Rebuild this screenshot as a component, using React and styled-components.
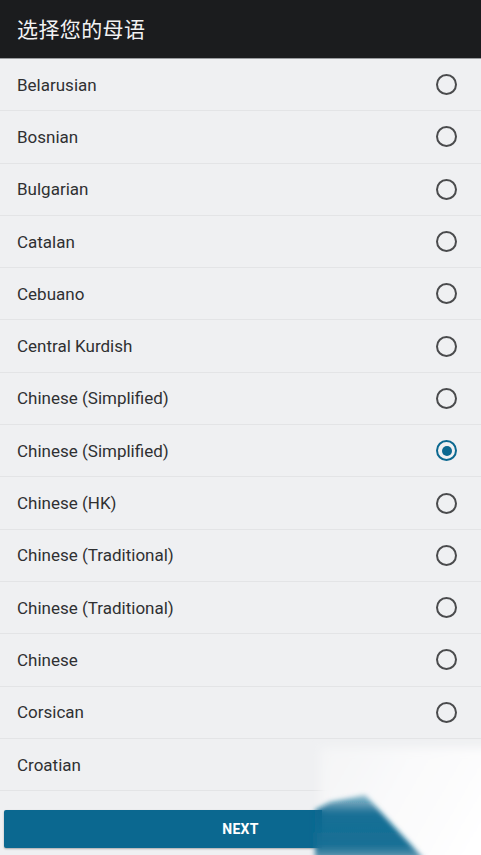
import React, { useState } from "react";
import styled, { createGlobalStyle } from "styled-components";

const Global = createGlobalStyle`
  html, body { margin: 0; padding: 0; background: #eff0f2; }
  body { font-family: Roboto, "Noto Sans", "Noto Sans CJK SC", sans-serif; }
  * { box-sizing: border-box; }
`;

const Page = styled.div`
  position: relative;
  width: 481px;
  height: 855px;
  overflow: hidden;
  background: #eff0f2;
  display: flex;
  flex-direction: column;
`;

const Header = styled.header`
  height: 59px;
  flex: none;
  background: #1b1c1e;
  border-bottom: 1px solid #9a9c9f;
  display: flex;
  align-items: center;
  padding: 0 17px 2px;
  color: #f2f2f2;
  font-family: "Noto Sans CJK SC", "Noto Sans", sans-serif;
  font-size: 21px;
  letter-spacing: 0.4px;
`;

const List = styled.ul`
  list-style: none;
  margin: 0;
  padding: 0;
  flex: none;
`;

const Row = styled.li`
  height: 52.3px;
  display: flex;
  align-items: center;
  justify-content: space-between;
  padding: 0 24px 0 17px;
  border-bottom: 1px solid #e3e4e6;
  font-size: 17px;
  color: #2f3032;
  cursor: pointer;
`;

const Radio = styled.span`
  width: 21px;
  height: 21px;
  border-radius: 50%;
  border: 2px solid ${(p) => (p.$on ? "#0b6890" : "#4a4b4d")};
  display: flex;
  align-items: center;
  justify-content: center;
  &::after {
    content: "";
    width: 10px;
    height: 10px;
    border-radius: 50%;
    background: ${(p) => (p.$on ? "#0b6890" : "transparent")};
  }
`;

const Footer = styled.div`
  padding: 19px 4px 7px;
`;

const NextButton = styled.button`
  width: 100%;
  height: 38px;
  border: none;
  border-radius: 2px;
  background: #0b6890;
  color: #ffffff;
  font-family: Roboto, sans-serif;
  font-weight: 700;
  font-size: 14px;
  letter-spacing: 0.3px;
  box-shadow: 0 1px 2px rgba(0, 0, 0, 0.3);
`;

const Smear = styled.svg`
  position: absolute;
  left: 290px;
  top: 734px;
  width: 191px;
  height: 121px;
  pointer-events: none;
`;

const languages = [
  "Belarusian",
  "Bosnian",
  "Bulgarian",
  "Catalan",
  "Cebuano",
  "Central Kurdish",
  "Chinese (Simplified)",
  "Chinese (Simplified)",
  "Chinese (HK)",
  "Chinese (Traditional)",
  "Chinese (Traditional)",
  "Chinese",
  "Corsican",
  "Croatian",
];

export default function App() {
  const [sel, setSel] = useState(7);
  return (
    <Page>
      <Global />
      <Header>选择您的母语</Header>
      <List>
        {languages.map((l, i) => (
          <Row key={i} onClick={() => setSel(i)}>
            <span>{l}</span>
            {i < 13 && <Radio $on={sel === i} />}
          </Row>
        ))}
      </List>
      <Footer>
        <NextButton>NEXT</NextButton>
      </Footer>
      <Smear viewBox="0 0 191 121">
        <defs>
          <linearGradient id="whiteG" x1="0" x2="1" y1="0" y2="0.4">
            <stop offset="0" stopColor="#f4f5f6" />
            <stop offset="0.5" stopColor="#fafafb" />
            <stop offset="1" stopColor="#ffffff" />
          </linearGradient>
          <linearGradient id="blueV" gradientUnits="userSpaceOnUse" x1="0" y1="60" x2="0" y2="125">
            <stop offset="0" stopColor="#0b6890" stopOpacity="0.35" />
            <stop offset="0.3" stopColor="#0b6890" stopOpacity="0.95" />
            <stop offset="0.8" stopColor="#176f95" stopOpacity="1" />
            <stop offset="1" stopColor="#4f8aa6" stopOpacity="0.85" />
          </linearGradient>
          <filter id="blurW" x="-30%" y="-30%" width="160%" height="160%">
            <feGaussianBlur stdDeviation="4" />
          </filter>
          <filter id="blurB" x="-30%" y="-30%" width="160%" height="160%">
            <feGaussianBlur stdDeviation="2.5" />
          </filter>
        </defs>
        <rect x="30" y="14" width="190" height="130" fill="url(#whiteG)" filter="url(#blurW)" />
        <rect x="0" y="76" width="32" height="38" fill="#0b6890" />
        <polygon
          points="25,76 40,68 75,61 134,125 25,125"
          fill="url(#blueV)"
          filter="url(#blurB)"
        />
      </Smear>
    </Page>
  );
}
